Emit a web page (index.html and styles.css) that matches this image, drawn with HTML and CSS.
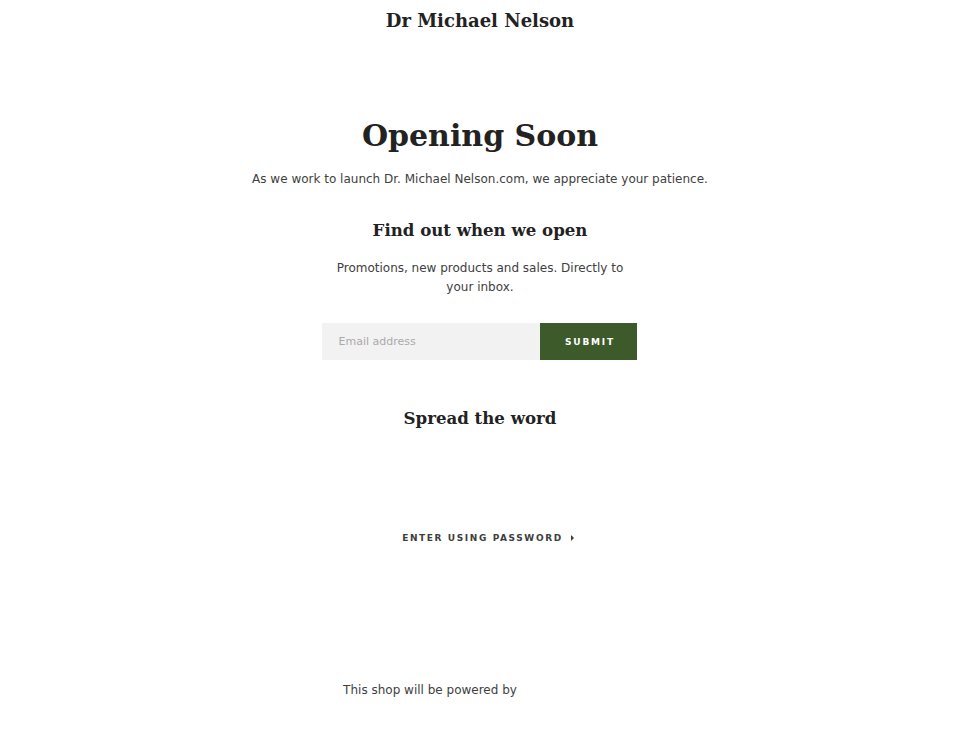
FILE: index.html
```html
<!DOCTYPE html>
<html lang="en">
<head>
<meta charset="utf-8">
<title>Dr Michael Nelson</title>
<link rel="stylesheet" href="styles.css">
</head>
<body>
<div class="page">
  <header class="site-header">
    <h1 class="shop-name">Dr Michael Nelson</h1>
  </header>
  <main class="main">
    <h2 class="title">Opening Soon</h2>
    <p class="lead">As we work to launch Dr. Michael Nelson.com, we appreciate your patience.</p>
    <h3 class="subtitle">Find out when we open</h3>
    <p class="blurb">Promotions, new products and sales. Directly to your inbox.</p>
    <form class="signup">
      <input class="email" type="email" placeholder="Email address">
      <button class="submit" type="button">Submit</button>
    </form>
    <h3 class="subtitle spread">Spread the word</h3>
    <a class="password-link" href="#">Enter using password<span class="caret"></span></a>
  </main>
  <footer class="footer">
    <span class="powered">This shop will be powered by</span><span class="logo-space"></span>
  </footer>
</div>
</body>
</html>
```
FILE: styles.css
```css
html, body {
  margin: 0;
  padding: 0;
  background: #fff;
}
body {
  font-family: "DejaVu Sans", sans-serif;
  color: #404040;
  font-size: 12px;
}
.page {
  display: flex;
  flex-direction: column;
  align-items: center;
  min-height: 735px;
}
.site-header {
  padding-top: 9px;
  text-align: center;
}
.shop-name {
  margin: 0;
  font-family: "DejaVu Serif", serif;
  font-weight: bold;
  font-size: 18px;
  line-height: 24px;
  color: #222;
}
.main {
  display: flex;
  flex-direction: column;
  align-items: center;
  text-align: center;
  padding-top: 80px;
}
.title {
  margin: 0;
  font-family: "DejaVu Serif", serif;
  font-weight: bold;
  font-size: 30px;
  line-height: 46px;
  color: #222;
}
.lead {
  margin: 10px 0 0;
  line-height: 20px;
}
.subtitle {
  margin: 29px 0 0;
  font-family: "DejaVu Serif", serif;
  font-weight: bold;
  font-size: 16.6px;
  line-height: 24px;
  color: #222;
}
.blurb {
  margin: 17px 0 0;
  width: 300px;
  line-height: 19px;
}
.signup {
  display: flex;
  margin-top: 26px;
}
.email {
  width: 218px;
  height: 37px;
  box-sizing: border-box;
  border: none;
  background: #f2f2f2;
  padding: 0 16px;
  font-family: "DejaVu Sans", sans-serif;
  font-size: 11px;
  color: #333;
  outline: none;
}
.email::placeholder {
  color: #aaa;
}
.submit {
  width: 97px;
  height: 37px;
  border: none;
  background: #3c5a2a;
  color: #fff;
  font-family: "DejaVu Sans", sans-serif;
  font-weight: bold;
  font-size: 9px;
  letter-spacing: 1.8px;
  text-transform: uppercase;
  padding: 0 0 0 2px;
}
.spread {
  margin-top: 46px;
}
.password-link {
  margin-top: 103px;
  padding-left: 16px;
  display: inline-flex;
  align-items: center;
  color: #3d3d3d;
  text-decoration: none;
  font-weight: bold;
  font-size: 9px;
  letter-spacing: 1.6px;
  text-transform: uppercase;
}
.caret {
  display: inline-block;
  width: 0;
  height: 0;
  margin-left: 8px;
  border-top: 3px solid transparent;
  border-bottom: 3px solid transparent;
  border-left: 3px solid #3d3d3d;
}
.footer {
  margin-top: auto;
  padding-bottom: 35px;
  display: flex;
  align-items: center;
}
.powered {
  line-height: 20px;
}
.logo-space {
  display: inline-block;
  width: 100px;
  height: 20px;
}
```
